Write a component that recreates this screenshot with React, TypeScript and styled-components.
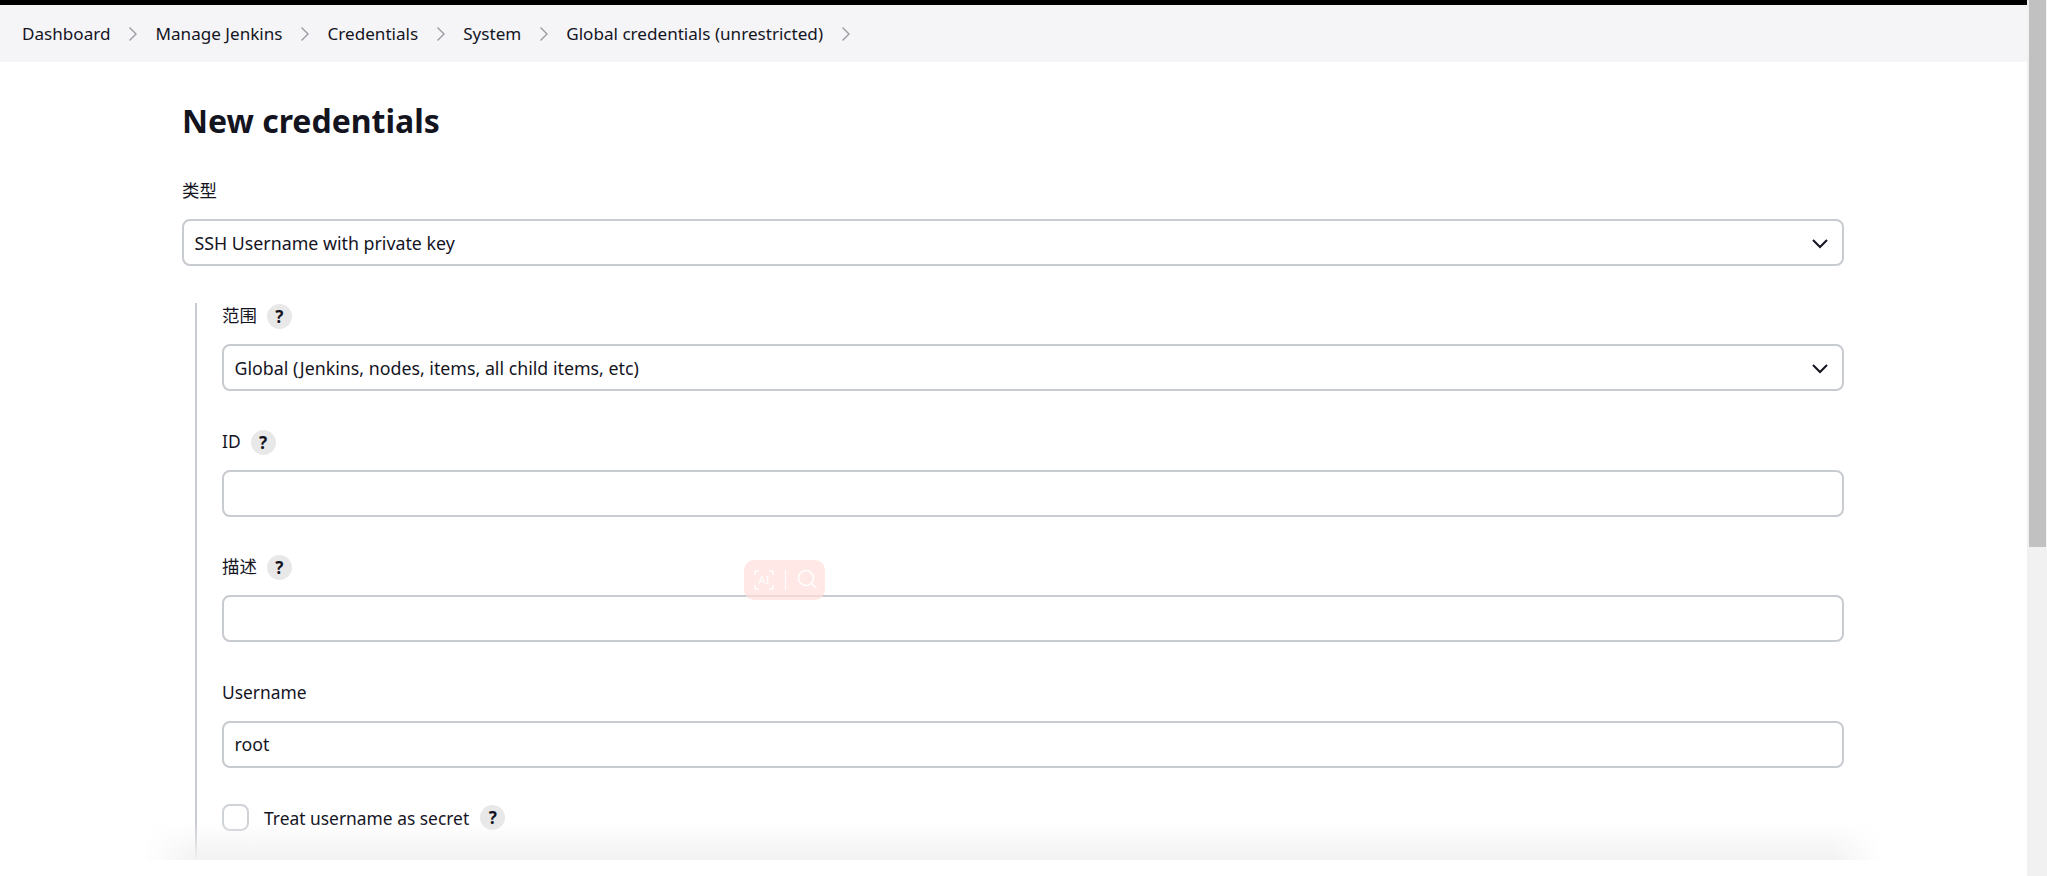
import styled, { createGlobalStyle } from 'styled-components'

const GlobalStyle = createGlobalStyle`
  html, body {
    margin: 0;
    height: 100%;
    overflow: hidden;
    background: #fff;
  }
  body {
    font-family: 'Noto Sans', 'Noto Sans CJK SC', sans-serif;
    font-size: 17.4px;
    color: #14141f;
  }
`

const crumbs = ['Dashboard', 'Manage Jenkins', 'Credentials', 'System', 'Global credentials (unrestricted)']

const Chevron = () => (
  <svg width="24" height="24" viewBox="0 0 24 24" fill="none" stroke="#9a9aa2" strokeWidth="1.4">
    <path d="M8.5 5.5 15 12l-6.5 6.5" />
  </svg>
)

const ChevronDown = () => (
  <svg width="18" height="12" viewBox="0 0 18 12" fill="none" stroke="#14141f" strokeWidth="2">
    <path d="M2 3l7 7 7-7" />
  </svg>
)

const Help = () => <HelpBadge>?</HelpBadge>

const App = () => (
  <Page>
    <GlobalStyle />
    <Main>
      <TopBar />
      <Breadcrumbs>
        {crumbs.map((c) => (
          <Crumb key={c}>
            <span>{c}</span>
            <Chevron />
          </Crumb>
        ))}
      </Breadcrumbs>
      <Content>
        <Title>New credentials</Title>
        <Label>类型</Label>
        <Select>
          SSH Username with private key
          <ChevronDown />
        </Select>
        <Nested>
          <Field>
            <Label>
              范围 <Help />
            </Label>
            <Select>
              Global (Jenkins, nodes, items, all child items, etc)
              <ChevronDown />
            </Select>
          </Field>
          <Field>
            <Label>
              ID <Help />
            </Label>
            <Input />
          </Field>
          <Field>
            <Label>
              描述 <Help />
            </Label>
            <Input />
          </Field>
          <Field>
            <Label>Username</Label>
            <Input>root</Input>
          </Field>
          <CheckRow>
            <CheckBox />
            <CheckText>Treat username as secret</CheckText>
            <Help />
          </CheckRow>
        </Nested>
      </Content>
      <BottomFade />
      <BottomBlank />
      <SearchPopup>
        <svg width="20" height="20" viewBox="0 0 20 20" fill="none" stroke="#fff" strokeWidth="1.3">
          <path d="M5 1H1v4M15 1h4v4M5 19H1v-4M15 19h4v-4" />
          <text x="10" y="14" textAnchor="middle" fontSize="11" fill="#fff" stroke="none" fontFamily="Noto Sans">
            AI
          </text>
        </svg>
        <PopupDivider />
        <svg width="22" height="22" viewBox="0 0 22 22" fill="none" stroke="#fff" strokeWidth="1.5">
          <circle cx="9" cy="9" r="7.5" />
          <path d="M14.5 14.5l5 4.5" />
        </svg>
      </SearchPopup>
    </Main>
    <ScrollTrack>
      <ScrollThumb />
    </ScrollTrack>
  </Page>
)

const Page = styled.div`
  display: flex;
  height: 876px;
  overflow: hidden;
`

const Main = styled.div`
  position: relative;
  flex: 1;
  min-width: 0;
  overflow: hidden;
`

const TopBar = styled.div`
  height: 5px;
  background: #000;
`

const Breadcrumbs = styled.nav`
  display: flex;
  align-items: center;
  height: 57px;
  padding-left: 22px;
  background: #f5f5f7;
  font-size: 17.1px;
`

const Crumb = styled.div`
  display: flex;
  align-items: center;
  gap: 10.5px;
  margin-right: 10.5px;
`

const Content = styled.main`
  width: 1662px;
  margin-left: 182px;
`

const Title = styled.h1`
  margin: 34px 0 33px;
  font-size: 32px;
  font-weight: 700;
  line-height: 50px;
`

const Label = styled.div`
  display: flex;
  align-items: flex-start;
  gap: 10px;
  height: 25px;
  margin-bottom: 15px;
  line-height: 23px;
`

const FieldBox = styled.div`
  box-sizing: border-box;
  display: flex;
  align-items: center;
  justify-content: space-between;
  height: 47px;
  padding: 0 10.5px;
  background: #fff;
  border: 2.5px solid #c8cbd0;
  border-radius: 8px;
  font-size: 17.8px;
`

const Select = styled(FieldBox)`
  padding-right: 13.5px;
`

const Input = styled(FieldBox)``

const Nested = styled.div`
  display: flex;
  flex-direction: column;
  gap: 38.6px;
  margin: 37px 0 0 13px;
  padding: 1px 0 0 25px;
  border-left: 2px solid #c8cbd0;
`

const Field = styled.div``

const CheckRow = styled.div`
  display: flex;
  align-items: center;
  gap: 15px;
  height: 27px;
  margin-top: -2px;
  padding-bottom: 40px;
`

const CheckText = styled.span`
  margin-right: -4px;
`

const CheckBox = styled.div`
  box-sizing: border-box;
  width: 27px;
  height: 27px;
  border: 2.5px solid #cfd2d7;
  border-radius: 8px;
`

const HelpBadge = styled.span`
  display: inline-flex;
  align-items: center;
  justify-content: center;
  width: 25px;
  height: 25px;
  border-radius: 50%;
  background: #e8e8e8;
  font-size: 17px;
  font-weight: 700;
`

const BottomFade = styled.div`
  position: absolute;
  left: 143px;
  right: 145px;
  bottom: 16px;
  height: 38px;
  background: linear-gradient(rgba(240, 240, 242, 0), #f2f2f3);
  mask-image: linear-gradient(90deg, transparent, #000 54px, #000 calc(100% - 50px), transparent);
`

const BottomBlank = styled.div`
  position: absolute;
  left: 0;
  right: 0;
  bottom: 0;
  height: 16px;
  background: #fff;
`

const SearchPopup = styled.div`
  position: absolute;
  left: 744px;
  top: 560px;
  box-sizing: border-box;
  display: flex;
  align-items: center;
  gap: 11px;
  width: 81px;
  height: 40px;
  padding-left: 10px;
  border-radius: 10px;
  background: rgba(255, 222, 218, 0.7);
`

const PopupDivider = styled.div`
  width: 1px;
  height: 20px;
  background: #fff;
`

const ScrollTrack = styled.div`
  box-sizing: border-box;
  width: 20px;
  padding: 0 1px 0 2px;
  background: #f1f1f1;
`

const ScrollThumb = styled.div`
  height: 547px;
  background: #c1c1c1;
`

export default App
